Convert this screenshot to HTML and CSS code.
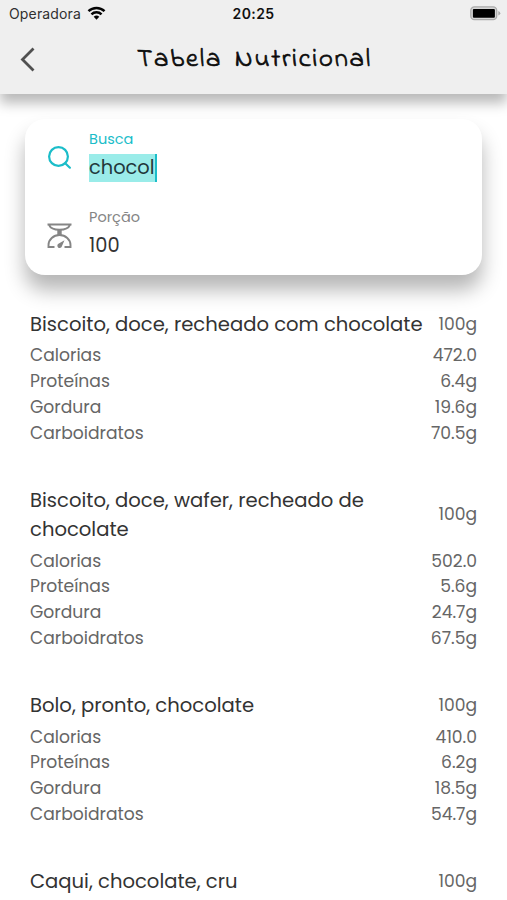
FILE: index.html
```html
<!DOCTYPE html>
<html lang="pt-BR">
<head>
<meta charset="utf-8">
<title>Tabela Nutricional</title>
<link rel="stylesheet" href="styles.css">
</head>
<body>
<header class="top">
  <div class="status">
    <div class="carrier"><span class="carrier-name">Operadora</span>
      <svg class="wifi" viewBox="0 0 20 15" width="19" height="14"><g fill="none" stroke="#050505" stroke-width="2.6"><path d="M1.4 5.6a12.2 12.2 0 0 1 17.2 0"/><path d="M4.6 9a7.7 7.7 0 0 1 10.8 0"/></g><path d="M10 14.6l-3-3a4.3 4.3 0 0 1 6 0z" fill="#050505"/></svg>
    </div>
    <div class="clock">20:25</div>
    <svg class="battery" viewBox="0 0 31 15" width="31" height="15"><rect x=".8" y=".8" width="25.900" height="12.900" rx="3.600" fill="#d6d6d6" stroke="#ababab" stroke-width="1.300"/><rect x="2.900" y="2.900" width="22" height="8.800" rx="1" fill="#000"/><path d="M28.300 5v4.600q2-.8 2-2.300t-2-2.300z" fill="#ababab"/></svg>
  </div>
  <div class="nav">
    <svg class="back" viewBox="0 0 16 25" width="16" height="25"><path d="M13.500 1.500L2.500 12.500l11 11" fill="none" stroke="#505050" stroke-width="2.800"/></svg>
    <h1>Tabela Nutricional</h1>
  </div>
</header>
<main>
  <section class="search">
    <label class="field active">
      <svg class="icon" viewBox="0 0 26 26" width="26" height="26"><g fill="none" stroke="#1bbdc9" stroke-width="2.200"><circle cx="11.500" cy="11.500" r="9.400"/><path d="M18.200 18.200l4.700 4.500" stroke-linecap="round"/></g></svg>
      <span class="texts"><span class="name">Busca</span><span class="value"><mark>chocol</mark></span></span>
    </label>
    <label class="field">
      <svg class="icon" viewBox="0 0 26 26" width="26" height="26"><g fill="none" stroke="#858585" stroke-width="1.900"><path d="M.5 1.500h24M2 1.800q2 4.900 10.500 4.900T23 1.800"/><path d="M7.500 24H1.500V22a11 10 0 0 1 22 0v2h-6"/></g><path d="M10.300 6.500h4.400v6h-4.400zM17.500 17.200l-2.600 6a2.300 2.300 0 1 1-3.500-2.400z" fill="#858585"/></svg>
      <span class="texts"><span class="name">Porção</span><span class="value">100</span></span>
    </label>
  </section>
  <section class="foods">
    <article><div class="head"><h2>Biscoito, doce, recheado com chocolate</h2><span class="num">100g</span></div>
      <dl><dt>Calorias</dt><dd>472.0</dd><dt>Proteínas</dt><dd>6.4g</dd><dt>Gordura</dt><dd>19.6g</dd><dt>Carboidratos</dt><dd>70.5g</dd></dl></article>
    <article><div class="head"><h2>Biscoito, doce, wafer, recheado de<br>chocolate</h2><span class="num">100g</span></div>
      <dl><dt>Calorias</dt><dd>502.0</dd><dt>Proteínas</dt><dd>5.6g</dd><dt>Gordura</dt><dd>24.7g</dd><dt>Carboidratos</dt><dd>67.5g</dd></dl></article>
    <article><div class="head"><h2>Bolo, pronto, chocolate</h2><span class="num">100g</span></div>
      <dl><dt>Calorias</dt><dd>410.0</dd><dt>Proteínas</dt><dd>6.2g</dd><dt>Gordura</dt><dd>18.5g</dd><dt>Carboidratos</dt><dd>54.7g</dd></dl></article>
    <article><div class="head"><h2>Caqui, chocolate, cru</h2><span class="num">100g</span></div></article>
  </section>
</main>
</body>
</html>
```
FILE: styles.css
```css
* { box-sizing: border-box; margin: 0; padding: 0; }
html, body { height: 900px; overflow: hidden; }
body { background: #fff; font-family: Poppins, Inter, "Open Sans", sans-serif; color: #333; }
.top { position: relative; height: 94px; background: #efefef; box-shadow: 0 9px 12px rgba(0,0,0,.28); }
.status { height: 26px; display: grid; grid-template-columns: 1fr auto 1fr; align-items: center; padding: 0 6px 0 9px; font-family: Inter, sans-serif; }
.carrier { display: flex; align-items: center; gap: 6px; font-size: 14px; letter-spacing: .15px; color: #303030; }
.clock { margin-right: 3px; font-size: 14px; font-weight: 600; letter-spacing: .4px; color: #111; }
.battery { justify-self: end; }
.nav { height: 66px; display: grid; grid-template-columns: 1fr auto 1fr; align-items: center; padding: 0 0 0 20px; }
h1 { margin: 0 0 0 -18px; font-family: "Indie Flower", cursive; font-weight: 400; font-size: 26.500px; letter-spacing: 1.850px; word-spacing: 4px; color: #0a0a0a; -webkit-text-stroke: .700px #0a0a0a; }
.search { margin: 25px 25px 0; height: 156px; border-radius: 20px; background: #fff; box-shadow: 0 15px 20px rgba(0,0,0,.29); padding: 9px 22px 0; }
.field { display: flex; height: 78px; color: #858585; }
.icon { margin: 17px 16px 0 0; }
.texts { display: block; }
.name { display: block; font-size: 14.500px; line-height: 22px; }
.active .name { color: #1bbdc9; }
.value { display: block; margin-top: 4px; font-size: 19.400px; line-height: 27px; color: #333; }
mark { display: inline-block; height: 28px; background: #9aece9; color: #22383c; border-right: 2px solid #1bbdc9; }
.foods { padding: 35px 30px 0; }
article { margin-bottom: 39.700px; }
.head { display: flex; justify-content: space-between; align-items: center; margin-bottom: 4.200px; }
h2 { font-weight: 400; font-size: 19.580px; line-height: 29.300px; white-space: nowrap; }
dl { display: grid; grid-template-columns: 1fr auto; font-size: 17.150px; line-height: 25.700px; color: #666; }
dd { text-align: right; }
.num { font-size: 17.150px; line-height: 25.700px; color: #666; }
```
